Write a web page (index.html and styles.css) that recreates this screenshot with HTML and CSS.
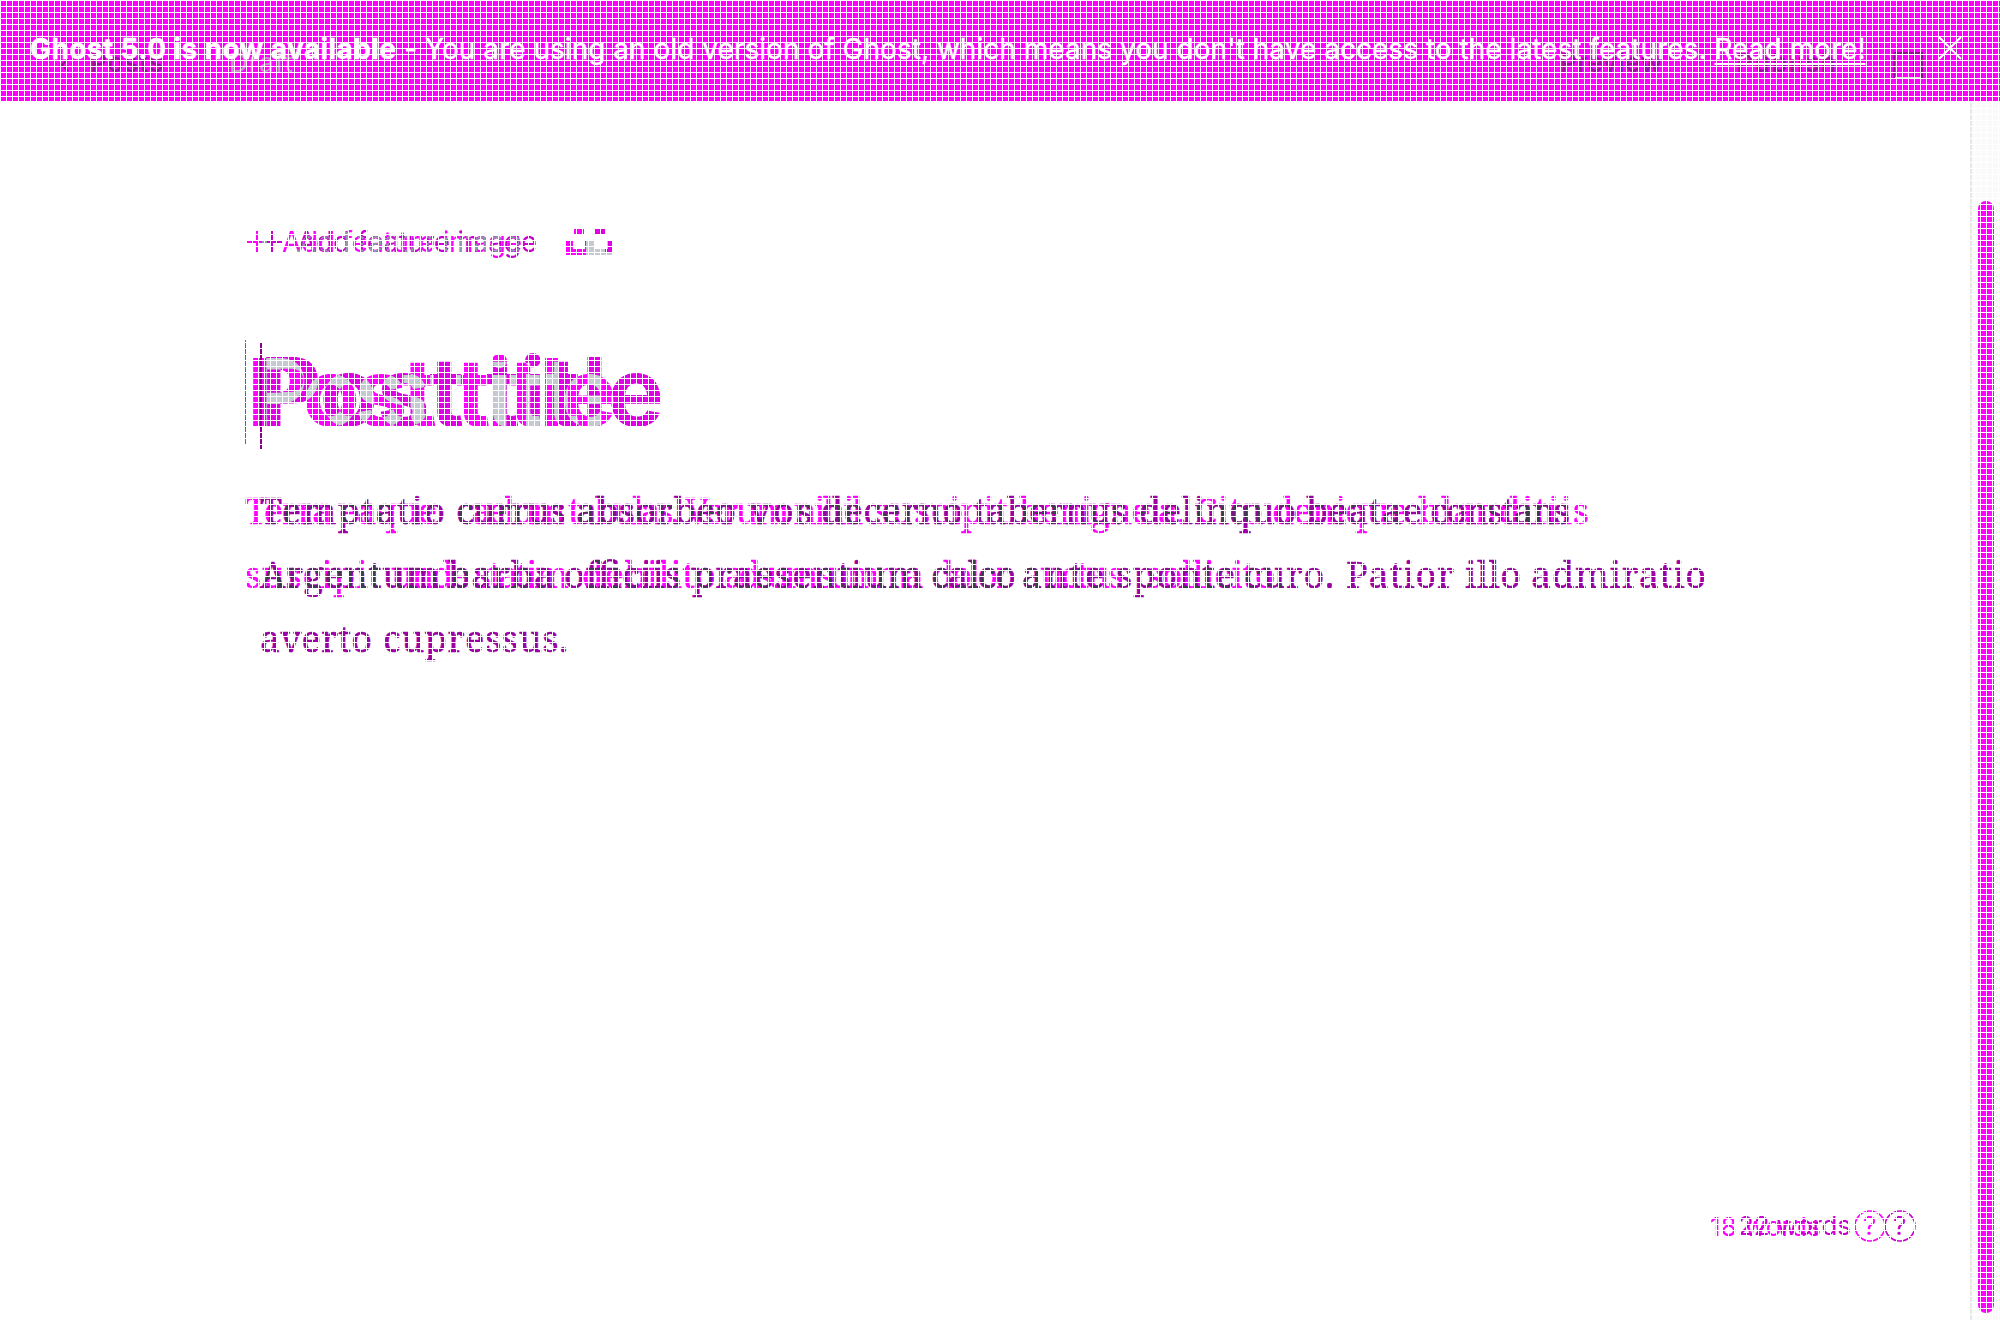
FILE: index.html
```
<!DOCTYPE html>
<html lang="en">
<head>
<meta charset="utf-8">
<title>Post editor</title>
<link rel="stylesheet" href="styles.css">
</head>
<body>
<div class="page">
  <header class="banner">
    <svg class="toolbar" viewBox="0 0 2000 101">
      <path d="M68 59L62 65L68 71" class="line"/>
      <text x="90" y="72" textLength="73">Posts</text>
      <text x="229" y="72" textLength="64" class="muted">Draft</text>
      <text x="1560" y="72" textLength="102">Preview</text>
      <text x="1736" y="72" textLength="100">Publish</text>
      <path d="M1894 53H1922V78H1894ZM1914 53V78" class="line"/>
      <path d="M1895 78H1921" class="pale"/>
    </svg>
    <div class="notice">
      <p><b>Ghost 5.0 is now available</b> - You are using an old version of Ghost, which means you don't have access to the latest features. <a>Read more!</a></p>
      <svg class="close" viewBox="0 0 24 24"><path d="M1 1L23 23M23 1L1 23"/></svg>
    </div>
  </header>
  <div class="body">
    <main class="editor">
      <svg class="feature" viewBox="245 220 1470 50">
        <defs>
          <text id="feature-text-old" x="282" y="252" textLength="240">Add feature image</text>
          <text id="feature-text" x="297" y="252" textLength="240">Add feature image</text>
          <clipPath id="feature-clip"><use href="#feature-text-old"/></clipPath>
        </defs>
        <path d="M247 241H267V243H247ZM256 231H258V253H256Z" class="old"/>
        <use href="#feature-text-old" class="old"/>
        <path d="M262 241H282V243H262ZM271 231H273V253H271Z" class="violet"/>
        <use href="#feature-text" class="violet"/>
        <g clip-path="url(#feature-clip)"><use href="#feature-text" class="slate"/></g>
        <path d="M262 241H267V243H262Z" class="slate"/>
        <path d="M574 229H584V234H574ZM566 241H573V249H585V241H592V255H566Z" class="old"/>
        <path d="M595 229H605V234H595ZM587 241H594V249H606V241H613V255H587Z" class="bright"/>
        <path d="M586 241H594V249H605V255H586ZM606 241H608V249H606ZM605 253H613V255H605Z" class="gray"/>
      </svg>
      <svg class="title" viewBox="245 330 1470 130">
        <defs>
          <text id="title-old" y="426" font-size="94"><tspan x="247" textLength="190" lengthAdjust="spacing">Post</tspan><tspan x="456" textLength="161" lengthAdjust="spacing">title</tspan></text>
          <text id="title-new" y="426"><tspan x="260" textLength="204" lengthAdjust="spacing">Post</tspan><tspan x="485" textLength="179" lengthAdjust="spacing">title</tspan></text>
          <clipPath id="title-clip"><use href="#title-old"/></clipPath>
        </defs>
        <use href="#title-old" class="old"/><use href="#title-new" class="bright"/>
        <g clip-path="url(#title-clip)"><use href="#title-new" class="gray"/></g>
        <path d="M245 340H246V444H245Z" class="old"/>
        <path d="M260 343H262V449H260Z" class="deep"/>
      </svg>
      <svg class="copy" viewBox="245 480 1470 190">
        <defs>
          <g id="copy-old">
            <text x="245" y="524" textLength="192">Terra eaque</text>
            <text x="457" y="524" textLength="222">caelum tabulas.</text>
            <text x="685" y="524" textLength="178">Verum nihil</text>
            <text x="874" y="524" textLength="134">suscipit</text>
            <text x="1019" y="524" textLength="167">benigne a.</text>
            <text x="1195" y="524" textLength="68">Cito</text>
            <text x="1272" y="524" textLength="136">denique</text>
            <text x="1418" y="524" textLength="171">blanditiis</text>
            <text x="245" y="588" textLength="136">suscipit</text>
            <text x="391" y="588" textLength="178">unde statim</text>
            <text x="582" y="588" textLength="134">debilito</text>
            <text x="724" y="588" textLength="200">adsum summa</text>
            <text x="932" y="588" textLength="80">dolor</text>
            <text x="1022" y="588" textLength="102">auctus</text>
            <text x="1146" y="588" textLength="138">sollicito.</text>
          </g>
          <g id="copy-new">
            <text x="260" y="524" textLength="185">Temptatio</text>
            <text x="456" y="524" textLength="110">currus</text>
            <text x="576" y="524" textLength="160">absorbeo</text>
            <text x="750" y="524" textLength="62">vos</text>
            <text x="821" y="524" textLength="142">decerno</text>
            <text x="974" y="524" textLength="153">tabernus</text>
            <text x="1139" y="524" textLength="157">delinquo</text>
            <text x="1306" y="524" textLength="116">beatae</text>
            <text x="1430" y="524" textLength="140">constans</text>
            <text x="260" y="588" textLength="180">Argentum</text>
            <text x="448" y="588" textLength="106">barba</text>
            <text x="564" y="588" textLength="117">officiis</text>
            <text x="692" y="588" textLength="230">praesentium</text>
            <text x="931" y="588" textLength="85">calco</text>
            <text x="1022" y="588" textLength="82">ante</text>
            <text x="1116" y="588" textLength="119">sponte</text>
            <text x="1244" y="588" textLength="90">curo.</text>
            <text x="1346" y="588" textLength="108">Patior</text>
            <text x="1465" y="588" textLength="56">illo</text>
            <text x="1531" y="588" textLength="175">admiratio</text>
            <text x="260" y="652" textLength="112">averto</text>
            <text x="383" y="652" textLength="185">cupressus.</text>
          </g>
          <clipPath id="copy-clip">
            <text x="245" y="524" textLength="192">Terra eaque</text>
            <text x="457" y="524" textLength="222">caelum tabulas.</text>
            <text x="685" y="524" textLength="178">Verum nihil</text>
            <text x="874" y="524" textLength="134">suscipit</text>
            <text x="1019" y="524" textLength="167">benigne a.</text>
            <text x="1195" y="524" textLength="68">Cito</text>
            <text x="1272" y="524" textLength="136">denique</text>
            <text x="1418" y="524" textLength="171">blanditiis</text>
            <text x="245" y="588" textLength="136">suscipit</text>
            <text x="391" y="588" textLength="178">unde statim</text>
            <text x="582" y="588" textLength="134">debilito</text>
            <text x="724" y="588" textLength="200">adsum summa</text>
            <text x="932" y="588" textLength="80">dolor</text>
            <text x="1022" y="588" textLength="102">auctus</text>
            <text x="1146" y="588" textLength="138">sollicito.</text>
          </clipPath>
        </defs>
        <use href="#copy-old" class="old"/><use href="#copy-new" class="purple"/>
        <g clip-path="url(#copy-clip)"><use href="#copy-new" class="ink"/></g>
      </svg>
      <footer class="status">
        <svg viewBox="1700 1200 230 50">
          <text x="1710" y="1236" textLength="111" class="old">18 words</text>
          <text x="1738" y="1235" textLength="113" class="violet">22 words</text>
          <circle cx="1870" cy="1226" r="15" class="ring-old"/>
          <circle cx="1900" cy="1226" r="15" class="ring"/>
          <text x="1863" y="1235" class="old">?</text>
          <text x="1893" y="1235" class="violet">?</text>
        </svg>
      </footer>
    </main>
    <aside class="track"><div class="thumb"></div></aside>
  </div>
  <div class="grid"></div>
</div>
</body>
</html>
```
FILE: styles.css
```
* { box-sizing: border-box; }
body { margin: 0; background: #fff; font-family: Inter, sans-serif; }
.page { position: relative; width: 2000px; height: 1320px; overflow: hidden; display: flex; flex-direction: column; }
.banner { position: relative; height: 101px; background: #f0f; flex: none; }
.toolbar { position: absolute; inset: 0; width: 2000px; height: 101px; font-size: 26px; font-weight: 500; fill: #9a109a; }
.toolbar .muted { fill: #c795c7; font-weight: 400; }
.line { fill: none; stroke: #8d108d; stroke-width: 2; }
.pale { stroke: #ddd; stroke-width: 2; }
.notice { position: relative; height: 101px; padding: 0 38px 5px 30px; display: flex; align-items: center; justify-content: space-between; color: #fff; }
.notice p { margin: 0; padding-top: 2px; font-size: 28px; line-height: 40px; white-space: nowrap; letter-spacing: 0.035px; -webkit-text-stroke: 0.3px #fff; }
.notice b { font-weight: 700; letter-spacing: 0.4px; }
.notice a { text-decoration: underline; text-decoration-thickness: 2px; text-underline-offset: 4px; }
.close { width: 24px; height: 24px; stroke: #fff; stroke-width: 2; fill: none; }
.body { flex: 1; display: flex; }
.editor { flex: 1; padding: 119px 0 0 245px; display: flex; flex-direction: column; }
.editor svg { display: block; flex: none; }
.feature { width: 1470px; height: 50px; font-size: 28px; font-weight: 400; }
.title { width: 1470px; height: 130px; margin-top: 60px; font-size: 95px; font-weight: 700; }
.copy { width: 1470px; height: 190px; margin-top: 20px; font-family: "Noto Serif", "DejaVu Serif Condensed", "DejaVu Serif", serif; font-size: 36px; }
.copy .old { stroke: #f0f; stroke-width: 0.4; }
.copy .purple { stroke: #9a00a2; stroke-width: 0.5; }
.status { display: flex; justify-content: flex-end; margin-top: 530px; padding-right: 40px; font-size: 26px; font-weight: 400; }
.status svg { width: 230px; height: 50px; }
.track { width: 30px; border-left: 2px solid #e8e8e8; background: #fafafa; padding: 100px 6px 7px; display: flex; }
.thumb { flex: 1; border-radius: 8px; background: #f0f; }
.old { fill: #f0f; }
.violet { fill: #c800d0; }
.bright { fill: #e000e6; }
.deep { fill: #8b008b; }
.purple { fill: #9a00a2; }
.slate { fill: #8e9cac; }
.gray { fill: #c5cad0; }
.ink { fill: #394047; }
.ring-old { fill: none; stroke: #f0f; stroke-width: 1.6; }
.ring { fill: none; stroke: #c800d0; stroke-width: 1.6; }
.grid { position: absolute; inset: 0; pointer-events: none; background: repeating-linear-gradient(90deg, #fff 0 1px, transparent 1px 6px), repeating-linear-gradient(#fff 0 1px, transparent 1px 6px); }
```
